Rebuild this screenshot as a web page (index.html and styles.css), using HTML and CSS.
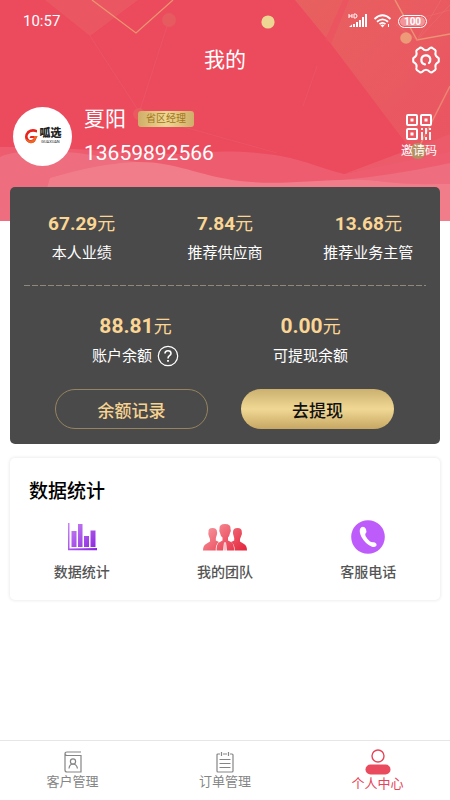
FILE: index.html
```html
<!DOCTYPE html>
<html lang="zh-CN">
<head>
<meta charset="utf-8">
<meta name="viewport" content="width=device-width, initial-scale=1">
<title>我的</title>
<link rel="stylesheet" href="styles.css">
</head>
<body>
<header class="hero">
  <svg class="hero-art" viewBox="0 0 450 221" preserveAspectRatio="none" aria-hidden="true">
    <defs>
      <linearGradient id="facet" x1="0" y1="0" x2="1" y2="1"><stop offset="0" stop-color="#e8605f"/><stop offset="1" stop-color="#ea5562"/></linearGradient>
    </defs>
    <rect width="450" height="221" fill="#ec4a5d"/>
    <path d="M45 0H138L90 36Z" fill="#ea5762"/>
    <path d="M295 0H450V156L408 146L331 44Z" fill="url(#facet)"/>
    <path d="M349 0L331 44L325 40L343 0Z" fill="#ec5060" opacity=".6"/>
    <path d="M0 147C70 147 120 153 180 154C210 151 240 150 275 155C305 160 320 168 344 174C375 168 405 157 450 145V221H0Z" fill="#ed5d6f"/>
    <path d="M344 174L408 150L450 134V152Z" fill="#ec5b6a"/>
    <path d="M0 157C15 149 60 149 105 157L150 164L170 221H0Z" fill="#ee6d7e"/>
    <path d="M280 184C340 181 385 177 450 163V221H280Z" fill="#ee6d7e"/>
    <path d="M47 188L50 178C85 168 105 164 135 162C175 161 195 175 240 181C290 187 340 175 385 182C410 185 430 184 450 184V221H47Z" fill="#f17d8b"/>
    <g fill="none">
      <path d="M92 0L136 33L173 0" stroke="#ea9470" stroke-width="1.3"/>
      <path d="M90 36L138 110M169 20L140 110M148 117L277 153M317 66L303 106" stroke="#ec6472" stroke-width=".8" opacity=".5"/>
      <path d="M395 0L417 40L450 34" stroke="#eb9475" stroke-width="1.5"/>
      <path d="M417 40L396 25L450 10M417 40L441 0M417 40L450 5" stroke="#ee7772" stroke-width=".7" opacity=".6"/>
      <path d="M450 86L417 151" stroke="#ec8474" stroke-width="1.5"/>
    </g>
    <circle cx="169" cy="20" r="7" fill="#e65b5f"/>
    <circle cx="139" cy="114" r="6" fill="#e9605f" opacity=".7"/>
    <circle cx="268" cy="22" r="6.6" fill="#edd594"/>
    <circle cx="406" cy="38" r="5.8" fill="#ec9a78"/>
    <circle cx="418" cy="151" r="8" fill="#b59061"/>
  </svg>

  <div class="status">
    <span class="clock">10:57</span>
    <div class="signals">
      <svg width="20" height="16" viewBox="0 0 20 16" aria-hidden="true">
        <path d="M1 1V5M4 1V5M1 3H4M6 1H7.200Q9 1 9 3T7.200 5H6Z" fill="none" stroke="#fff"/>
        <path d="M1 14L4 11.500V14ZM5 11H7V14H5ZM8 9H10V14H8ZM11 7H13V14H11ZM14 4H16V14H14ZM17 1H19V14H17Z" fill="#fff"/>
      </svg>
      <svg width="20" height="16" viewBox="0 0 20 16" aria-hidden="true">
        <path d="M1.500 6Q9.500 -1.500 17.500 6M4 8.800Q9.500 4 15 8.800M6.500 11.200Q9.500 8.500 12.500 11.200" fill="none" stroke="#fff" stroke-width="1.800"/>
        <path d="M7.500 12.300Q9.500 10.800 11.500 12.300L9.500 14.500Z" fill="#fff"/>
        <path d="M15.500 11V14" stroke="#fff"/>
      </svg>
      <span class="battery">100</span>
    </div>
  </div>

  <div class="titlebar">
    <h1>我的</h1>
    <button class="icon-button" type="button" aria-label="设置">
      <svg width="30" height="30" viewBox="0 0 30 30" fill="none" stroke="#fff" stroke-width="2" stroke-linecap="round" stroke-linejoin="round" aria-hidden="true">
        <path d="M8 3.500Q9.500 2 11 3Q13 5.200 15 5.200T19 3Q20.500 2 22 3.500L24 4.800Q25.200 6 24.500 7.800Q23.800 10.500 26.500 12.300Q28.300 13 27.700 15Q28.300 17 26.500 17.700Q23.800 19.500 24.500 22.200Q25.200 24 24 25.200L22 26.500Q20.500 28 19 27Q17 24.800 15 24.800T11 27Q9.500 28 8 26.500L6 25.200Q4.800 24 5.500 22.200Q6.200 19.500 3.500 17.700Q1.700 17 2.300 15Q1.700 13 3.500 12.300Q6.200 10.500 5.500 7.800Q4.800 6 6 4.800Z"/>
        <path d="M14 19.300A4.500 4.500 0 1 1 19.300 14Q19.600 16.500 18 18" stroke-width="2.200"/>
      </svg>
    </button>
  </div>

  <div class="profile">
    <div class="avatar">
      <svg width="14" height="16" viewBox="0 0 14 16" aria-hidden="true">
        <path d="M13 2Q8 -.5 3.500 3Q-1 8 2.500 13Q6 17 11 13.500L13.500 8H6.500L5.500 10H10Q8 13 5 11.500Q2.500 9 4.500 6Q7 2.500 13 4.500Z" fill="#e9241c"/>
        <path d="M1 10Q4 17 10 14.500L13.500 8H10L9.500 11.500Q5 14 1 10Z" fill="#f06522"/>
      </svg>
      <div class="brand"><b>呱选</b><small>GUAXUAN</small></div>
    </div>
    <div class="person">
      <div class="name-row"><span class="name">夏阳</span><span class="badge">省区经理</span></div>
      <div class="phone">13659892566</div>
    </div>
    <button class="invite" type="button">
      <svg width="28" height="28" viewBox="0 0 28 28" fill="none" stroke="#fff" stroke-width="2" aria-hidden="true">
        <rect x="2" y="2" width="10" height="10" rx="1"/><rect x="16" y="2" width="10" height="10" rx="1"/><rect x="2" y="16" width="10" height="10" rx="1"/>
        <path d="M5.500 7H8.500M19.500 7H22.500M5.500 21H8.500" stroke-width="3"/>
        <path d="M17 15V17M17 19V27M21 15V21M21 24V27M25 15V17M25 19V27" stroke-width="1.800"/>
      </svg>
      <span>邀请码</span>
    </button>
  </div>
</header>

<main>
  <section class="wallet">
    <dl class="totals">
      <div><dd><b>67.29</b>元</dd><dt>本人业绩</dt></div>
      <div><dd><b>7.84</b>元</dd><dt>推荐供应商</dt></div>
      <div><dd><b>13.68</b>元</dd><dt>推荐业务主管</dt></div>
    </dl>
    <div class="divider"></div>
    <dl class="balances">
      <div><dd><b>88.81</b>元</dd><dt>账户余额
        <svg width="22" height="22" viewBox="0 0 22 22" fill="none" stroke="#fff" aria-hidden="true">
          <circle cx="11" cy="11" r="9.700" stroke-width="1.200"/>
          <path d="M8 8.500Q8 5.800 11 5.800T14 8.400Q14 9.600 12.500 10.700Q11 11.800 11 13.500" stroke-width="1.600"/><path d="M11 15V16.800" stroke-width="1.800"/>
        </svg></dt></div>
      <div><dd><b>0.00</b>元</dd><dt>可提现余额</dt></div>
    </dl>
    <div class="actions">
      <button class="pill" type="button">余额记录</button>
      <button class="pill gold" type="button">去提现</button>
    </div>
  </section>

  <section class="tools">
    <h2>数据统计</h2>
    <div class="tool-row">
      <a href="#stats">
        <svg width="32" height="34" viewBox="0 0 32 34" aria-hidden="true">
          <defs><linearGradient id="violet" x1="0" y1="0" x2="1" y2="1"><stop offset="0" stop-color="#c987f4"/><stop offset="1" stop-color="#8922df"/></linearGradient></defs>
          <path d="M2 3H3.500V28.500L31 28V30.300H2ZM5.500 11H10.500V27H5.500ZM12 4H16.500V27H12ZM18 16H23V27H18ZM24.500 10.500H29.500V27H24.500Z" fill="url(#violet)"/>
        </svg>
        <span>数据统计</span>
      </a>
      <a href="#team">
        <svg width="46" height="34" viewBox="0 0 46 34" aria-hidden="true">
          <defs><linearGradient id="rose" gradientUnits="userSpaceOnUse" x1="8" y1="4" x2="36" y2="34"><stop offset="0" stop-color="#f7949b"/><stop offset="1" stop-color="#e52b42"/></linearGradient></defs>
          <g fill="url(#rose)">
            <path d="M6.500 12Q6 8 10.500 8T15 12Q15.500 13 14.800 15Q13.500 18 13.800 20.500L17 22Q13.500 24 13.800 30.500H1Q1 25.500 4 24L8 21.500Q8.500 19 7 16.500Q5.800 14 6.500 12Z"/>
            <path d="M31 12Q31 8 35.500 8T39.800 12Q40.500 14 39 16.500Q37.500 19 38 21.500L42 24Q45 25.500 45 30.500H32.500Q33 24 29 22L32.200 20.500Q32.600 18 31.500 15.500Q30.800 13 31 12Z"/>
            <path d="M17.500 9Q17 4 23 4T28.500 9Q29.500 11 28 13Q27.500 16 26 17.500V20.500L30 22.500Q32 24 32 30.500H25L24 22.500H22L21 30.500H14.500Q14.500 24 17 22.500L20.500 20.500V17.500Q18.500 16 18 13Q16.800 11 17.500 9Z"/>
            <path d="M22.200 23H23.800L24.500 30.500H21.500Z" opacity=".35"/>
          </g>
        </svg>
        <span>我的团队</span>
      </a>
      <a href="#service">
        <svg width="34" height="34" viewBox="0 0 34 34" aria-hidden="true">
          <circle cx="17" cy="17" r="16.800" fill="#be5bfb"/>
          <path d="M9 9Q10.500 6 13.500 7.200Q16 9 15.500 12Q13.500 14 14.500 16Q16.500 19.500 19 21.500Q20.500 22.500 23 22.200Q26 23 25.500 25.500Q23.500 28 20.500 26.500Q14 23.500 10.500 17Q8 12 9 9Z" fill="#fff"/>
        </svg>
        <span>客服电话</span>
      </a>
    </div>
  </section>
</main>

<nav class="tabs">
  <a href="#customers">
    <svg width="18" height="22" viewBox="0 0 18 22" fill="none" stroke="#858585" stroke-width="1.200" aria-hidden="true">
      <path d="M17 1H3Q1 1 1 3V19Q1 21 3 21H17V4.500H3Q1 4.500 1 2.500"/>
      <circle cx="9" cy="10.500" r="2.600"/><path d="M5 17.500Q5.500 13 9 13Q12.500 13 13.500 17.500"/>
    </svg>
    <span>客户管理</span>
  </a>
  <a href="#orders">
    <svg width="18" height="22" viewBox="0 0 18 22" fill="none" stroke="#858585" stroke-width="1.200" aria-hidden="true">
      <path d="M4 3H2Q1 3 1 4V20Q1 21 2 21H16Q17 21 17 20V4Q17 3 16 3H14M7 3H11M5.500 1V5M12.500 1V5M3.500 8.500H14.500M3.500 12.500H14.500M3.500 16.500H14.500"/>
    </svg>
    <span>订单管理</span>
  </a>
  <a class="current" href="#me" aria-current="page">
    <svg width="26" height="26" viewBox="0 0 26 26" aria-hidden="true">
      <circle cx="13" cy="7" r="6" fill="none" stroke="#e64458" stroke-width="1.400"/>
      <rect x="0.500" y="15.500" width="25" height="10" rx="5" fill="#e94a5d"/>
    </svg>
    <span>个人中心</span>
  </a>
</nav>
</body>
</html>
```

FILE: styles.css
```css
* {
  box-sizing: border-box;
}

body {
  margin: 0;
  min-height: 100vh;
  display: flex;
  flex-direction: column;
  background: #fff;
  color: #000;
  font-family: Roboto, "Noto Sans CJK SC", sans-serif;
}

h1, h2, dl, dd {
  margin: 0;
}

button {
  padding: 0;
  border: 0;
  background: none;
  color: inherit;
  font: inherit;
}

a {
  color: inherit;
  text-decoration: none;
}

svg {
  display: block;
  flex: none;
}

/* Header */
.hero {
  position: relative;
  padding-bottom: 53px;
  color: #fff;
}

.hero-art {
  position: absolute;
  inset: 0;
  width: 100%;
  height: 100%;
}

.status,
.titlebar,
.profile {
  position: relative;
}

.status {
  display: flex;
  align-items: center;
  justify-content: space-between;
  height: 42px;
  padding: 0 23px;
}

.clock {
  font-size: 15px;
}

.signals {
  display: flex;
  align-items: center;
  gap: 5px;
}

.battery {
  width: 29px;
  border: 1px solid #fff;
  border-radius: 7px;
  box-shadow: inset 0 0 0 1px #ea5a60;
  background: #f1959a;
  font-size: 10px;
  font-weight: 700;
  line-height: 11px;
  text-align: center;
}

.titlebar {
  display: grid;
  grid-template-columns: 1fr auto 1fr;
  align-items: center;
  height: 36px;
  padding: 0 9px;
}

.titlebar h1 {
  grid-column: 2;
  font-size: 21px;
  font-weight: 400;
  line-height: 30px;
}

.icon-button {
  justify-self: end;
}

.profile {
  display: flex;
  align-items: center;
  margin-top: 26px;
  padding: 0 13px;
}

.avatar {
  display: flex;
  align-items: center;
  justify-content: center;
  gap: 2px;
  width: 59px;
  height: 59px;
  border-radius: 50%;
  background: #fff;
  color: #222;
}

.brand {
  display: grid;
}

.brand b {
  font-size: 11px;
  font-weight: 900;
  line-height: 12px;
}

.brand small {
  font-size: 4px;
  line-height: 4px;
  text-align: center;
}

.person {
  flex: 1;
  margin-left: 12px;
}

.name-row {
  display: flex;
  align-items: center;
  gap: 12px;
  height: 30px;
}

.name,
.phone {
  font-size: 21px;
  line-height: 30px;
}

.phone {
  margin-top: 4px;
}

.badge {
  padding: 0 8px;
  border-radius: 3px;
  background: linear-gradient(90deg, #cfae68, #eed793 50%, #cfae68);
  color: #a5751c;
  font-size: 10px;
  line-height: 16px;
}

.invite {
  display: flex;
  flex-direction: column;
  align-items: center;
  gap: 1px;
  font-size: 12px;
  line-height: 18px;
}

/* Cards */
main {
  position: relative;
  flex: 1;
  margin-top: -34px;
  padding: 0 10px 16px;
}

.wallet {
  padding: 23px 0 15px;
  border-radius: 5px;
  background: #4a4a4a;
  color: #fff;
}

.totals,
.balances {
  display: grid;
  text-align: center;
}

.totals {
  grid-template-columns: repeat(3, 1fr);
}

.balances {
  grid-template-columns: repeat(2, 1fr);
  padding: 0 42px 0 38px;
}

.totals > div,
.balances > div {
  display: flex;
  flex-direction: column;
}

.totals dd,
.balances dd {
  color: #fad594;
  font-size: 18px;
  line-height: 28px;
}

.totals b {
  font-size: 19px;
}

.balances b {
  font-size: 21px;
}

.totals dt,
.balances dt {
  display: flex;
  align-items: center;
  justify-content: center;
  gap: 5px;
  font-size: 15px;
  line-height: 30px;
}

.divider {
  height: 1px;
  margin: 17px 14px 26px;
  background: repeating-linear-gradient(90deg, #8f887c 0 6px, transparent 6px 8px);
}

.actions {
  display: flex;
  justify-content: space-between;
  margin-top: 18px;
  padding: 0 46px 0 45px;
}

.pill {
  width: 153px;
  height: 40px;
  border: 1px solid #96835f;
  border-radius: 20px;
  color: #f6d391;
  font-size: 17px;
  font-weight: 500;
}

.gold {
  border: 0;
  background: linear-gradient(#cbb070, #f0d894 50%, #c6a763);
  color: #111;
}

.tools {
  margin-top: 14px;
  padding: 20px 0 16px;
  border-radius: 5px;
  box-shadow: 0 0 3px 1px #eee;
  background: #fff;
}

.tools h2 {
  padding-left: 19px;
  font-size: 19px;
  font-weight: 500;
  line-height: 28px;
}

.tool-row {
  display: grid;
  grid-template-columns: repeat(3, 1fr);
  margin-top: 14px;
}

.tool-row a {
  display: flex;
  flex-direction: column;
  align-items: center;
  gap: 6px;
  color: #555;
  font-size: 14px;
  font-weight: 500;
  line-height: 24px;
}

/* Bottom navigation */
.tabs {
  display: grid;
  grid-template-columns: 145fr 160fr 145fr;
  height: 60px;
  border-top: 1px solid #e6e6e6;
  background: #fff;
}

.tabs a {
  display: flex;
  flex-direction: column;
  align-items: center;
  padding-top: 10px;
  color: #858585;
  font-size: 13px;
  line-height: 18px;
}

.tabs .current {
  padding-top: 8px;
  color: #e64458;
}
```
